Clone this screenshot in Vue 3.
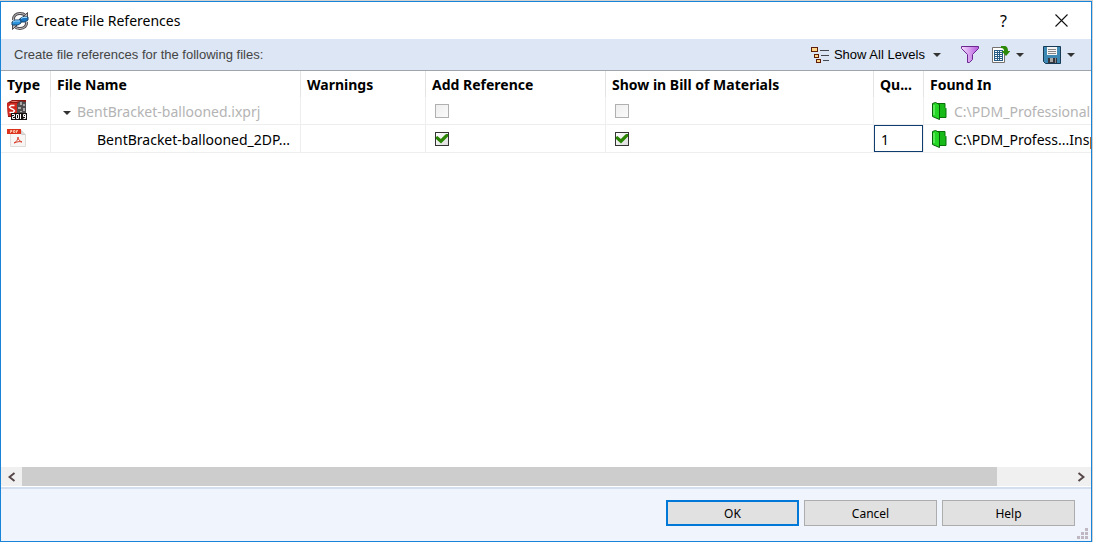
<script setup>
import { ref } from 'vue'

const columns = [
  { key: 'type', label: 'Type' },
  { key: 'name', label: 'File Name' },
  { key: 'warnings', label: 'Warnings' },
  { key: 'add', label: 'Add Reference' },
  { key: 'bom', label: 'Show in Bill of Materials' },
  { key: 'qty', label: 'Qu...' },
  { key: 'found', label: 'Found In' },
]
const rows = ref([
  { id: 1, parent: true, name: 'BentBracket-ballooned.ixprj', add: false, bom: false, qty: '', found: 'C:\\PDM_Professional' },
  { id: 2, parent: false, name: 'BentBracket-ballooned_2DP...', add: true, bom: true, qty: '1', found: 'C:\\PDM_Profess...Insp' },
])
const gripDots = [[8, 0], [4, 4], [8, 4], [0, 8], [4, 8], [8, 8]]
</script>

<template>
  <div class="desktop">
    <main class="dialog">
      <header class="titlebar">
        <svg class="app-icon" width="18" height="18" viewBox="0 0 18 18" aria-hidden="true">
          <path d="M2.500 8C2 4 5 1.500 9 1.500c2 0 4 .5 5.500 2" stroke="#4f4b50" stroke-width="3" fill="none" />
          <path d="M15.500 10c.5 4-2.500 6.500-6.500 6.500-2 0-4-.5-5.500-2" stroke="#4f4b50" stroke-width="3" fill="none" />
          <path d="M2.500 8C2 4 5 1.500 9 1.500c2 0 4 .5 5.500 2M15.500 10c.5 4-2.500 6.500-6.500 6.500-2 0-4-.5-5.500-2" stroke="#c3c1c4" fill="none" />
          <path d="M16.500.5v6h-6zM1.500 17.500v-6h6z" fill="#b5b3b6" stroke="#4f4b50" />
          <path d="M8.500 7l3-2H17v3l-3 2H8.500z" fill="#1876c4" stroke="#17456e" />
          <path d="M1 10l3-2h6v3l-3 2H1z" fill="#2c93dc" stroke="#17456e" />
          <path d="M10 6.500l2-1h4M2 10l2-1h5" stroke="#9edcff" fill="none" />
        </svg>
        <h1>Create File References</h1>
        <button class="caption help" aria-label="Help">?</button>
        <button class="caption" aria-label="Close">
          <svg width="13" height="13" viewBox="0 0 13 13"><path d="M.5.5l12 12M12.500.5l-12 12" stroke="#111" stroke-width="1.1" /></svg>
        </button>
      </header>

      <div class="toolbar">
        <p>Create file references for the following files:</p>
        <button class="tool levels">
          <svg width="19" height="16" viewBox="0 0 19 16" shape-rendering="crispEdges" aria-hidden="true">
            <g fill="#ffd58a" stroke="#5d1d08"><path d="M.5.5h6v4h-6zM3.500 7.500h4v3h-4zM5.500 12.500h4v3h-4z" /></g>
            <path d="M9 3.500h9M10 8.500h8M12 13.500h6" stroke="#44484e" />
          </svg>
          <span>Show All Levels</span><i class="arrow"></i>
        </button>
        <button class="tool filter" aria-label="Filter">
          <svg width="18" height="17" viewBox="0 0 18 17">
            <defs><linearGradient id="funnel"><stop offset="0" stop-color="#f4dcff" /><stop offset="1" stop-color="#b65bdc" /></linearGradient></defs>
            <path d="M.5.5h17v2l-6 6v5l-3 3h-2v-8l-6-6z" fill="url(#funnel)" stroke="#6c2791" />
          </svg>
        </button>
        <button class="tool export" aria-label="Export">
          <svg width="18" height="18" viewBox="0 0 18 18">
            <path d="M.5 1.500h12v15H.5z" fill="#fff" stroke="#75706c" />
            <path d="M2 4h9v11H2z" fill="#285c85" />
            <path d="M3 5h2v1H3zM6 5h1v1H6zM8 5h2v1H8zM3 7h2v1H3zM6 7h1v1H6zM8 7h2v1H8zM3 9h2v1H3zM6 9h1v1H6zM8 9h2v1H8zM3 11h2v1H3zM6 11h1v1H6zM8 11h2v1H8zM3 13h2v1H3zM6 13h1v1H6zM8 13h2v1H8z" fill="#fff" />
            <path d="M9 0h3c3 0 4 2 4 5h2.500l-4.500 5-4.500-5H12c0-2-1-3-3-3z" fill="#2d8a08" />
          </svg>
          <i class="arrow"></i>
        </button>
        <button class="tool save" aria-label="Save">
          <svg width="18" height="18" viewBox="0 0 18 18">
            <path d="M.5.5h17v17h-15l-2-2z" fill="#3e88b4" stroke="#173a56" />
            <path d="M4 1h10v8H4z" fill="#f6f6f6" /><path d="M5 3.500h8M5 5.500h8M5 7.500h8" stroke="#858585" />
            <path d="M5 12h9v5H5z" fill="#34383e" /><path d="M7 12h3v4H7z" fill="#a8a8a8" /><path d="M12 12h1v5h-1z" fill="#888" />
          </svg>
          <i class="arrow"></i>
        </button>
      </div>

      <div class="grid-area">
        <table>
          <colgroup><col v-for="c in columns" :key="c.key" :class="'col-' + c.key" /></colgroup>
          <thead>
            <tr><th v-for="c in columns" :key="c.key" scope="col">{{ c.label }}</th></tr>
          </thead>
          <tbody>
            <tr v-for="r in rows" :key="r.id" :class="{ dim: r.parent }">
              <td class="type">
                <svg v-if="r.parent" width="21" height="21" viewBox="0 0 21 21" role="img" aria-label="Inspection project 2019">
                  <path d="M0 3l5-3h14v17H1z" fill="#8f1712" /><path d="M0 3h10v13H1z" fill="#d0281c" /><path d="M3 2l3-1h6l-3 1z" fill="#f07a6c" />
                  <path d="M7.500 5.500H4L2.500 7 4 8.500l2.500 1L7.500 11 6 12.500H2.500" fill="none" stroke="#fff" stroke-width="1.500" />
                  <path d="M10 4l3-3 6 1v12h-9z" fill="#4f4d4e" /><path d="M13 2h2v3h-2zM16 4h2v2h-2zM11 7h3v2h-3zM16 8h2v3h-2zM13 11h2v1h-2z" fill="#a9a7a8" />
                  <path d="M4 13h16v7H4z" fill="#171112" />
                  <path d="M5 14.500h2.500v2h-2v2H8M9.500 14.500h2v4h-2zM13.500 14v5M18.500 16.500h-2v-2h2v4h-2" fill="none" stroke="#fff" />
                </svg>
                <svg v-else width="21" height="21" viewBox="0 0 21 21" role="img" aria-label="PDF file">
                  <path d="M3.500 2.500h11l4 4v12h-15z" fill="#f8f6f5" stroke="#e0dcda" /><path d="M14.500 2.500v4h4" fill="#ddd" stroke="#d0cccb" />
                  <path d="M0 1h14v5H0z" fill="#dc321e" />
                  <path d="M3.500 5V2.500h1.500v1H4M6.500 2.500H8v2H6.500zM9.500 5V2.500h1.500M9.500 3.500h1" fill="none" stroke="#ffd5b8" stroke-width=".8" />
                  <path d="M7 15c2-1 4-3 4-6 0 3 2 4 4 5-3-1-5 0-8 1z" fill="none" stroke="#d9412c" />
                </svg>
              </td>
              <td class="name"><i v-if="r.parent" class="arrow"></i><span>{{ r.name }}</span></td>
              <td></td>
              <td class="tick"><input v-model="r.add" type="checkbox" :disabled="r.parent" :aria-label="'Add reference ' + r.name" /></td>
              <td class="tick"><input v-model="r.bom" type="checkbox" :disabled="r.parent" :aria-label="'Show in bill of materials ' + r.name" /></td>
              <td class="qty"><input v-if="!r.parent" v-model="r.qty" type="text" aria-label="Quantity" /></td>
              <td class="found">
                <div>
                  <svg width="15" height="18" viewBox="0 0 15 18" aria-hidden="true">
                    <path d="M5 1.500h8v4l1 1v9H5z" fill="#17ba17" stroke="#087008" />
                    <path d="M.5 1.500l3-1 4 2v15l-7-3z" fill="#25d725" stroke="#075f07" />
                    <path d="M2 3v10" stroke="#93f893" />
                  </svg>
                  <span>{{ r.found }}</span>
                </div>
              </td>
            </tr>
          </tbody>
        </table>
      </div>

      <div class="scrollbar">
        <button aria-label="Scroll left"><svg width="8" height="10" viewBox="0 0 8 10"><path d="M6.500 1l-5 4 5 4" /></svg></button>
        <div class="track"><div class="thumb"></div></div>
        <button aria-label="Scroll right"><svg width="8" height="10" viewBox="0 0 8 10"><path d="M1.500 1l5 4-5 4" /></svg></button>
      </div>

      <footer>
        <button class="primary">OK</button>
        <button>Cancel</button>
        <button>Help</button>
        <svg class="grip" width="11" height="11" viewBox="0 0 11 11" aria-hidden="true">
          <rect v-for="(d, i) in gripDots" :key="i" :x="d[0]" :y="d[1]" width="3" height="3" fill="#bfb8c3" />
        </svg>
      </footer>
    </main>
  </div>
</template>

<style>
body { background: #d2d2d2; }
</style>

<style scoped>
* { box-sizing: border-box; }
.desktop { height: 100vh; padding: 1px 1px 0 0; font-family: "Noto Sans", "Open Sans", sans-serif; font-size: 14px; color: #000; }
.dialog { height: 100%; display: flex; flex-direction: column; border: 1px solid #1883d7; background: #fff; overflow: hidden; }
button { font: inherit; color: inherit; border: 0; padding: 0; background: none; }
svg { display: block; flex: none; }

.titlebar { display: flex; align-items: center; height: 37px; flex: none; padding-left: 10px; }
.titlebar h1 { flex: 1; margin: 0 0 0 6px; font-size: 14px; font-weight: 400; }
.caption { width: 60px; height: 36px; display: flex; align-items: center; justify-content: center; }
.caption.help { width: 55px; font-size: 16px; }

.toolbar { display: flex; align-items: center; height: 32px; flex: none; padding: 0 16px 0 13px; background: #dce6f4; border-bottom: 1px solid #a0a5ab; font-family: "Liberation Sans", Arial, sans-serif; font-size: 13px; }
.toolbar p { flex: 1; margin: 0; color: #444; }
.tool { display: flex; align-items: center; }
.arrow { width: 0; height: 0; flex: none; border: 4px solid transparent; border-top-color: #333; border-bottom: 0; }
.levels span { margin: 0 8px 0 4px; }
.filter { margin: 0 13px 0 20px; }
.export .arrow { margin-left: 6px; }
.save { margin-left: 19px; }
.save .arrow { margin-left: 6px; }

.grid-area { flex: 1; min-height: 0; overflow: hidden; }
table { width: 100%; table-layout: fixed; border-collapse: separate; border-spacing: 0; }
.col-type { width: 50px; }
.col-name { width: 250px; }
.col-warnings { width: 125px; }
.col-add { width: 180px; }
.col-bom { width: 268px; }
.col-qty { width: 50px; }
th { height: 26px; padding: 0 0 0 6px; text-align: left; font-weight: 700; white-space: nowrap; overflow: hidden; border-right: 1px solid #e4e4e4; }
td { height: 28px; padding: 0; white-space: nowrap; overflow: hidden; border-right: 1px solid #eee; border-bottom: 1px solid #eee; }
th:last-child, td:last-child { border-right: 0; }
.type { padding-left: 6px; }
.name { padding: 2px 0 0 46px; }
.dim .name { padding-left: 12px; }
.dim .name .arrow { display: inline-block; margin-right: 6px; vertical-align: middle; }
.dim .name, .dim .found { color: #b4b4b4; }
.tick { padding-left: 9px; }
.tick input { appearance: none; display: block; width: 14px; height: 14px; margin: 0; border: 1px solid #333; background: linear-gradient(135deg, #fff, #ddd); }
.tick input:disabled { border-color: #b0b0b0; background: linear-gradient(135deg, #eee, #fafafa); }
.tick input:checked { display: grid; place-items: center; }
.tick input:checked::before { content: ""; width: 12px; height: 10px; background: #2b8505; clip-path: polygon(0 35%, 12% 25%, 40% 55%, 88% 0, 100% 5%, 100% 30%, 42% 100%, 0 55%); }
.qty input { display: block; width: 100%; height: 27px; padding: 2px 6px 0; border: 1px solid #103d70; border-radius: 0; font: inherit; background: #fff; }
.found { padding-left: 8px; }
.found div { display: flex; align-items: center; gap: 7px; }
.found span { padding-top: 2px; }

.scrollbar { display: flex; height: 19px; margin-bottom: 1px; flex: none; background: #f0f0f0; }
.scrollbar button { width: 21px; display: flex; align-items: center; justify-content: center; }
.scrollbar path { fill: none; stroke: #554648; stroke-width: 2; }
.track { flex: 1; }
.thumb { width: 93%; height: 100%; background: #cdcdcd; }

footer { position: relative; display: flex; justify-content: flex-end; gap: 5px; flex: none; height: 54px; padding: 11px 16px 0; border-top: 2px solid #d3dfee; background: #f0f4fc; font-size: 12px; }
footer button { width: 133px; height: 26px; border: 1px solid #adadad; background: #e1e1e1; }
footer .primary { border: 2px solid #0078d7; }
.grip { position: absolute; right: 3px; bottom: 2px; }
</style>
